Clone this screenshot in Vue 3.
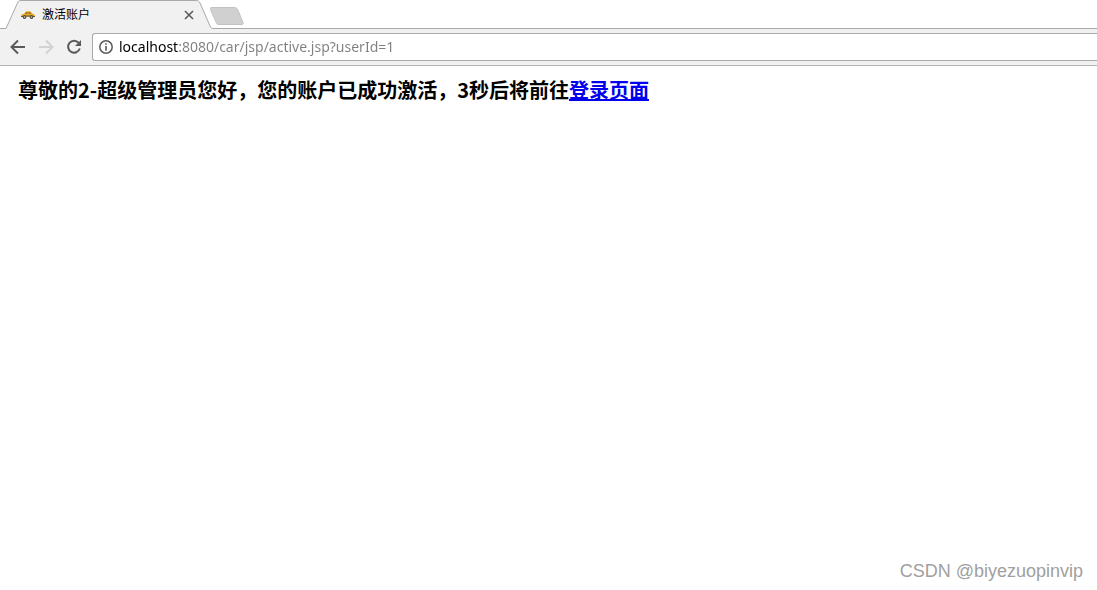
<script setup>
import { ref } from 'vue'

const title = '激活账户'
const address = ref('localhost:8080/car/jsp/active.jsp?userId=1')
const userName = '2-超级管理员'
const seconds = 3
</script>

<template>
  <div class="browser">
    <header>
      <div class="tab-strip">
        <div class="tab">
          <svg class="tab-shape" width="208" height="29" viewBox="0 0 208 29" aria-hidden="true">
            <path d="M0 28.500L11.500 3C12.300 1 13 .5 15 .5H190C192 .5 193 1 194 3L204 26C205 28 205.500 28.500 208 28.500V29H0Z" fill="#f1f1f1" />
            <path d="M0 28.500L11.500 3C12.300 1 13 .5 15 .5H190C192 .5 193 1 194 3L204 26C205 28 205.500 28.500 208 28.500" fill="none" stroke="#a9a9a9" />
          </svg>
          <svg class="favicon" width="14" height="10" viewBox="0 0 14 10" aria-hidden="true">
            <path d="M0 5.500C.3 4.300 1.500 4 3 3.700L4.700 1.500C5.200 1 9 1 9.700 1.500L11.500 3.700C13 4 14 4.500 14 6V7H0Z" fill="#e9ad24" />
            <path d="M4 3.700 5.300 2.200H6.700V3.700ZM7.500 2.200H9.200L10.300 3.700H7.500Z" fill="#8a6a28" />
            <path d="M0 6H2V7H0ZM5 5.500H9V6.500H5ZM12 6H14V7H12Z" fill="#6b5630" />
            <circle cx="3.500" cy="7" r="1.900" fill="#4d4a45" />
            <circle cx="10.500" cy="7" r="1.900" fill="#4d4a45" />
            <circle cx="3.500" cy="7" r=".8" fill="#ccc" />
            <circle cx="10.500" cy="7" r=".8" fill="#ccc" />
          </svg>
          <span class="tab-title">{{ title }}</span>
          <button class="close" type="button" aria-label="关闭">
            <svg width="10" height="10" viewBox="0 0 10 10"><path d="M1 1 9 9M9 1 1 9" fill="none" stroke="#5a5a5a" stroke-width="1.600" /></svg>
          </button>
        </div>
        <button class="new-tab" type="button" aria-label="新标签页">
          <svg width="36" height="19" viewBox="0 0 36 19">
            <path d="M3 .5H25.500C27 .5 28 1 28.700 2.500L34 15.500C34.500 17 34 17.500 33 17.500H10C8.500 17.500 7.800 17 7.200 15.500L1.500 2.500C1 1 1.500 .5 3 .5Z" fill="#d0d0d0" stroke="#c2c2c2" />
          </svg>
        </button>
      </div>
      <nav class="toolbar">
        <button class="tool" type="button" aria-label="后退">
          <svg width="16" height="16" viewBox="0 0 16 16"><path d="M15 8H2M8 1.500 1.500 8 8 14.500" fill="none" stroke="#5a5a5a" stroke-width="2" /></svg>
        </button>
        <button class="tool" type="button" aria-label="前进" disabled>
          <svg width="16" height="16" viewBox="0 0 16 16"><path d="M1 8H14M8 1.500 14.500 8 8 14.500" fill="none" stroke="#d2d2d2" stroke-width="2" /></svg>
        </button>
        <button class="tool" type="button" aria-label="重新加载">
          <svg width="16" height="16" viewBox="0 0 16 16">
            <path d="M12.700 3.800A6 6 0 1 0 13.800 9.500" fill="none" stroke="#5a5a5a" stroke-width="2" />
            <path d="M15 1V7H9Z" fill="#5a5a5a" />
          </svg>
        </button>
        <div class="omnibox">
          <svg width="14" height="14" viewBox="0 0 14 14" aria-hidden="true">
            <circle cx="7" cy="7" r="6.200" fill="none" stroke="#5a5a5a" stroke-width="1.500" />
            <path d="M6.200 3.200H7.800V4.800H6.200ZM6.200 6H7.800V10.800H6.200Z" fill="#5a5a5a" />
          </svg>
          <input v-model="address" type="text" aria-label="地址" spellcheck="false" />
        </div>
      </nav>
    </header>
    <main>
      <h1>尊敬的{{ userName }}您好，您的账户已成功激活，{{ seconds }}秒后将前往<a href="#login">登录页面</a></h1>
    </main>
    <footer>CSDN @biyezuopinvip</footer>
  </div>
</template>

<style>
body {
  margin: 0;
  background: #fff;
}
</style>

<style scoped>
.browser {
  display: flex;
  flex-direction: column;
  min-height: 100vh;
  overflow: hidden;
  font-family: "Noto Sans CJK SC", sans-serif;
}
svg {
  display: block;
  flex: none;
}
button {
  padding: 0;
  border: 0;
  background: none;
}
.tab-strip {
  display: flex;
  height: 29px;
  padding-left: 6px;
  box-sizing: border-box;
  background: linear-gradient(#a9a9a9, #a9a9a9) bottom / 100% 1px no-repeat;
}
.tab {
  position: relative;
  display: flex;
  align-items: center;
  width: 208px;
  padding: 0 20px 0 15px;
  box-sizing: border-box;
}
.tab-shape {
  position: absolute;
  inset: 0;
}
.favicon,
.tab-title,
.close {
  position: relative;
}
.tab-title {
  flex: 1;
  margin-left: 7px;
  padding-bottom: 2px;
  font: 12px/26px "Noto Sans CJK SC", sans-serif;
  color: #000;
}
.new-tab {
  display: flex;
  align-items: center;
  width: 36px;
  margin-left: -5px;
  padding-top: 3px;
}
.toolbar {
  display: flex;
  align-items: center;
  height: 37px;
  padding-left: 10px;
  box-sizing: border-box;
  border-bottom: 1px solid #b6b6b6;
  background: #f1f1f1;
}
.tool {
  width: 16px;
  margin-right: 12px;
}
.tool:nth-of-type(3) {
  margin-right: 10px;
}
.omnibox {
  display: flex;
  flex: 1;
  align-items: center;
  height: 28px;
  padding-left: 6px;
  box-sizing: border-box;
  border: 1px solid #a9a9a9;
  border-right: 0;
  border-radius: 3px 0 0 3px;
  background: #fff;
}
input {
  flex: 1;
  min-width: 0;
  height: 24px;
  margin-left: 6px;
  padding: 0;
  border: 0;
  outline: 0;
  font: 14px/24px "Noto Sans", sans-serif;
  color: transparent;
  caret-color: #000;
  background: linear-gradient(90deg, #000 60px, #808080 60px);
  background-clip: text;
}
main {
  flex: 1;
  padding: 10px 18px;
}
h1 {
  margin: 0;
  font-size: 20px;
  line-height: 28px;
  font-weight: 700;
  color: #000;
}
a {
  color: #00e;
  text-decoration: underline;
}
footer {
  padding: 0 14px 7px;
  font: 18px/24px "Liberation Sans", sans-serif;
  text-align: right;
  color: #a0a0a0;
}
</style>
